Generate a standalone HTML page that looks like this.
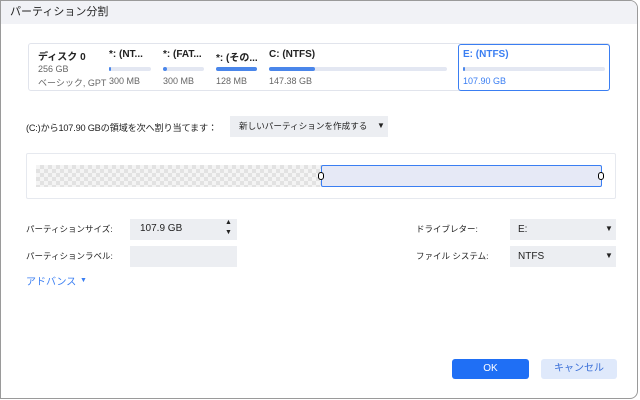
<!DOCTYPE html>
<html><head><meta charset="utf-8"><style>
*{box-sizing:border-box;margin:0;padding:0}
body{width:640px;height:400px;background:#fff;font-family:"Liberation Sans","Noto Sans CJK JP",sans-serif;position:relative;overflow:hidden;color:#222}
.win{position:absolute;left:0;top:0;width:638px;height:399px;border:1px solid #9a9a9a;border-radius:0 8px 8px 0;background:#fff;overflow:hidden}
.title{position:absolute;left:0;top:0;right:0;height:23px;background:#f1f2f6;font-size:11px;line-height:23px;padding-left:9px;color:#222}
.a{position:absolute;white-space:nowrap}
.card{position:absolute;left:27px;top:42px;width:582px;height:48px;border:1px solid #e1e4ec;border-radius:3px}
.sel{position:absolute;left:457px;top:43px;width:152px;height:47px;border:1.5px solid #3a7ef2;border-radius:3px}
.bar{position:absolute;height:4px;border-radius:2px;background:#e3e7f2}
.fill{position:absolute;left:0;top:0;height:4px;border-radius:2px;background:#4a86ea}
.t{font-size:10px;font-weight:bold}
.s{font-size:9px;color:#666}
.box{position:absolute;background:#eceef2}
.tri{position:absolute;font-size:8px}
</style></head><body>
<div class="win">
<div class="title">パーティション分割</div>
<div class="card"></div>
<div class="sel"></div>
<div class="a t" style="left:37px;top:47px">ディスク 0</div>
<div class="a s" style="left:37px;top:63px">256 GB</div>
<div class="a s" style="left:37px;top:75px">ベーシック, GPT</div>

<div class="a t" style="left:108px;top:48px">*: (NT...</div>
<div class="bar" style="left:108px;top:66px;width:42px"><div class="fill" style="width:2px"></div></div>
<div class="a s" style="left:108px;top:75px">300 MB</div>
<div class="a t" style="left:162px;top:48px">*: (FAT...</div>
<div class="bar" style="left:162px;top:66px;width:41px"><div class="fill" style="width:4px"></div></div>
<div class="a s" style="left:162px;top:75px">300 MB</div>
<div class="a t" style="left:215px;top:48px">*: (その...</div>
<div class="bar" style="left:215px;top:66px;width:41px"><div class="fill" style="width:41px"></div></div>
<div class="a s" style="left:215px;top:75px">128 MB</div>
<div class="a t" style="left:268px;top:48px">C: (NTFS)</div>
<div class="bar" style="left:268px;top:66px;width:178px"><div class="fill" style="width:46px"></div></div>
<div class="a s" style="left:268px;top:75px">147.38 GB</div>
<div class="a t" style="left:462px;top:48px;color:#3a7ef2">E: (NTFS)</div>
<div class="bar" style="left:462px;top:66px;width:142px"><div class="fill" style="width:2px"></div></div>
<div class="a s" style="left:462px;top:75px;color:#3a7ef2">107.90 GB</div>

<div class="a" style="left:25px;top:119px;font-size:9.2px;letter-spacing:-0.2px">(C:)から107.90 GBの領域を次へ割り当てます：</div>
<div class="box" style="left:229px;top:115px;width:158px;height:21px"></div>
<div class="a" style="left:238px;top:119px;font-size:8.6px">新しいパーティションを作成する</div>
<div class="tri" style="left:376px;top:120px">▼</div>

<div style="position:absolute;left:25px;top:152px;width:590px;height:46px;border:1px solid #e6e9ef;border-radius:2px"></div>
<div style="position:absolute;left:35px;top:164px;width:286px;height:22px;background-color:#f4f4f4;background-image:linear-gradient(45deg,#e2e2e2 25%,transparent 25%,transparent 75%,#e2e2e2 75%),linear-gradient(45deg,#e2e2e2 25%,transparent 25%,transparent 75%,#e2e2e2 75%);background-size:8px 8px;background-position:0 0,4px 4px"></div>
<div style="position:absolute;left:320px;top:164px;width:281px;height:22px;background:#e6e9f6;border:1.5px solid #3a7ef2;border-radius:2px"></div>
<div style="position:absolute;left:317px;top:171px;width:6px;height:8px;border:1.5px solid #000;border-radius:3px;background:#fff"></div>
<div style="position:absolute;left:597px;top:171px;width:6px;height:8px;border:1.5px solid #000;border-radius:3px;background:#fff"></div>

<div class="a" style="left:25px;top:222px;font-size:8.5px">パーティションサイズ:</div>
<div class="box" style="left:129px;top:218px;width:107px;height:21px"></div>
<div class="a" style="left:139px;top:222px;font-size:10px">107.9 GB</div>
<div class="tri" style="left:224px;top:218px;font-size:7px">▲</div>
<div class="tri" style="left:224px;top:228px;font-size:7px">▼</div>
<div class="a" style="left:25px;top:249px;font-size:8.5px">パーティションラベル:</div>
<div class="box" style="left:129px;top:245px;width:107px;height:21px"></div>
<div class="a" style="left:415px;top:222px;font-size:8.5px">ドライブレター:</div>
<div class="box" style="left:509px;top:218px;width:106px;height:21px"></div>
<div class="a" style="left:517px;top:223px;font-size:10px">E:</div>
<div class="tri" style="left:604px;top:223px">▼</div>
<div class="a" style="left:415px;top:249px;font-size:8.5px">ファイル システム:</div>
<div class="box" style="left:509px;top:245px;width:106px;height:21px"></div>
<div class="a" style="left:517px;top:250px;font-size:10px">NTFS</div>
<div class="tri" style="left:604px;top:250px">▼</div>
<div class="a" style="left:25px;top:272px;font-size:10px;color:#3a7ef2">アドバンス</div>
<div class="tri" style="left:79px;top:276px;color:#3a7ef2;font-size:7px">▼</div>

<div style="position:absolute;left:451px;top:358px;width:77px;height:20px;background:#1f6ff5;border-radius:3px;color:#fff;font-size:10px;text-align:center;line-height:20px">OK</div>
<div style="position:absolute;left:540px;top:358px;width:76px;height:20px;background:#dfe9fb;border-radius:3px;color:#3a6fd8;font-size:10px;text-align:center;line-height:20px">キャンセル</div>
</div>
</body></html>
